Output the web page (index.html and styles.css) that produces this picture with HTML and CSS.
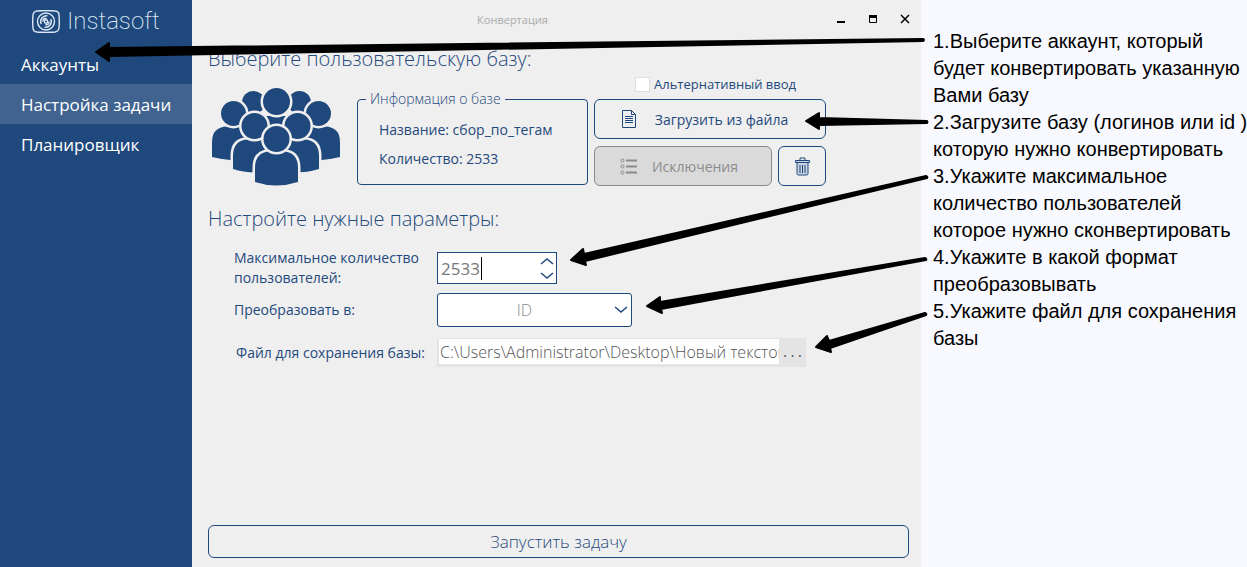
FILE: index.html
```html
<!DOCTYPE html>
<html lang="ru">
<head>
	<meta charset="utf-8">
	<title>Конвертация</title>
	<link rel="stylesheet" href="styles.css">
</head>
<body>

<div class="app">
    <aside class="sidebar">
        <div class="logo">
            <svg width="28" height="23" viewBox="0 0 28 23" fill="none" stroke="#DCE8F6" stroke-width="1.4">
                <path d="M5 1 Q14 .2 23 1 Q27 1.5 27 5 Q27.6 11.5 27 18 Q26.5 21.5 23 22 Q14 22.8 5 22 Q1 21.5 1 18 Q.4 11.5 1 5 Q1.5 1.5 5 1Z"/>
                <circle cx="14" cy="11.5" r="8.5"/>
                <circle cx="14" cy="11.5" r="1.7"/>
                <path d="M9.2 14 A5.800 5.800 0 0 1 15.500 5.900 M10.800 11.500 A3.600 3.600 0 0 1 14.500 8.200 M18.800 9 A5.800 5.800 0 0 1 12.500 17.100 M17.200 11.500 A3.600 3.600 0 0 1 13.500 14.800"/>
            </svg>
            <span>Instasoft</span>
        </div>
        <nav>
            <a href="#">Аккаунты</a>
            <a href="#" class="active">Настройка задачи</a>
            <a href="#">Планировщик</a>
        </nav>
    </aside>

    <main class="window">
        <header class="titlebar">
            <div class="title">Конвертация</div>
            <button aria-label="Свернуть"><svg width="10" height="10"><path d="M1 8h8" stroke="#000" stroke-width="2"/></svg></button>
            <button aria-label="Развернуть"><svg width="10" height="10"><path d="M1.5 1v7.5h7V1" fill="none" stroke="#000"/><path d="M1 2.5h8" stroke="#000" stroke-width="3"/></svg></button>
            <button aria-label="Закрыть"><svg width="10" height="10"><path d="M1 1l8 8M9 1l-8 8" stroke="#000" stroke-width="1.5"/></svg></button>
        </header>

        <div class="content">
            <h2>Выберите пользовательскую базу:</h2>
            <div class="base">
                <svg class="people" width="128" height="98" viewBox="0 0 128 98">
                    <circle cx="41.5" cy="14.5" r="11.5"/>
                    <circle cx="87.5" cy="14.5" r="11.5"/>
                    <path d="M54 28H76L72 37H57Z"/>
                    <circle cx="64.5" cy="13.5" r="13.5"/>
                    <path d="M0 69V54Q0 39 15 38.5H40V73Q16 73 0 69Z"/>
                    <path d="M128 69V54Q128 39 113 38.5H88V73Q112 73 128 69Z"/>
                    <circle cx="21.5" cy="25.5" r="12.5"/>
                    <circle cx="106.5" cy="25.5" r="12.5"/>
                    <path d="M21 81V68Q21 52 36 51.5H60V84Q36 86 21 81Z"/>
                    <path d="M107 81V68Q107 52 92 51.5H68V84Q92 86 107 81Z"/>
                    <circle cx="42.5" cy="38" r="13"/>
                    <circle cx="85.5" cy="38" r="13"/>
                    <path d="M43 94V80Q43 64 58 63.5H71Q86 64 86 80V94Q64 101 43 94Z"/>
                    <circle cx="64.5" cy="51" r="13"/>
                </svg>
                <fieldset class="info">
                    <legend>Информация о базе</legend>
                    <p>Название: сбор_по_тегам</p>
                    <p>Количество: 2533</p>
                </fieldset>
                <div class="actions">
                    <label class="alt"><input type="checkbox">Альтернативный ввод</label>
                    <button class="btn load">
                        <svg width="14" height="18" fill="none" stroke="#1F497D"><path d="M.5.5h9l4 4v13H.5zM9.5.5v4h4M3 6.5h8M3 8.5h8M3 10.5h8M3 12.5h8"/></svg>
                        Загрузить из файла
                    </button>
                    <button class="btn except" disabled>
                        <svg width="17" height="17" fill="none" stroke="#8A8A8A"><circle cx="2.5" cy="2.5" r="1.5"/><circle cx="2.5" cy="8.5" r="1.5"/><circle cx="2.5" cy="14.5" r="1.5"/><path d="M6 2.5h11M6 8.5h11M6 14.5h11" stroke-width="2"/></svg>
                        Исключения
                    </button>
                    <button class="btn trash" aria-label="Удалить">
                        <svg width="15" height="19" fill="#C9D2E0" stroke="#1F497D"><path d="M5 3V1h5v2" fill="none"/><path d="M2 6v10.5q0 1.5 1.5 1.5h8q1.5 0 1.5-1.5V6M.5 3.5h14v2H.5zM5 8v8M7.5 8v8M10 8v8"/></svg>
                    </button>
                </div>
            </div>

            <h2>Настройте нужные параметры:</h2>
            <div class="params">
                <label for="max">Максимальное количество пользователей:</label>
                <div class="number">
                    <input id="max" type="text" value="2533">
                    <i class="caret"></i>
                    <div class="steps">
                        <button aria-label="Больше"><svg width="14" height="8"><path d="M1 7l6-5 6 5"/></svg></button>
                        <button aria-label="Меньше"><svg width="14" height="8"><path d="M1 1l6 5 6-5"/></svg></button>
                    </div>
                </div>

                <label for="format">Преобразовать в:</label>
                <div class="select">
                    <select id="format"><option>ID</option></select>
                    <svg width="14" height="8"><path d="M1 1l6 5 6-5"/></svg>
                </div>

                <label for="file" class="file-label">Файл для сохранения базы:</label>
                <div class="file">
                    <input id="file" type="text" value="C:\Users\Administrator\Desktop\Новый текстовый документ.txt">
                    <button aria-label="Обзор">. . .</button>
                </div>
            </div>

            <button class="btn start">Запустить задачу</button>
        </div>
    </main>

    <aside class="notes">
        <p>1.Выберите аккаунт, который<br>будет конвертировать указанную<br>Вами базу</p>
        <p>2.Загрузите базу (логинов или id )<br>которую нужно конвертировать</p>
        <p>3.Укажите максимальное<br>количество пользователей<br>которое нужно сконвертировать</p>
        <p>4.Укажите в какой формат<br>преобразовывать</p>
        <p>5.Укажите файл для сохранения<br>базы</p>
    </aside>

    <!-- Arrows from the notes to the controls -->
    <svg class="arrows" width="940" height="380" stroke="#000" stroke-linejoin="round" stroke-width="2">
        <path d="M96 52L109 43L109 48L923 39Q925 40 923 41L109 56L109 61Z"/>
        <path d="M806 121L819 113L819 118L927 121Q928 122 927 123L819 125L819 129Z"/>
        <path d="M571 260L583 249L584 254L926 176Q928 177 927 178L585 261L586 265Z"/>
        <path d="M647 306L660 297L660 302L925 258Q927 259 926 260L661 309L662 313Z"/>
        <path d="M816 347L827 336L829 341L925 313Q927 314 926 315L830 348L831 352Z"/>
    </svg>
</div>

</body>
</html>
```
FILE: styles.css
```css
* { box-sizing: border-box; }
body {
    margin: 0;
    font-family: "Open Sans", "Noto Sans", sans-serif;
    font-size: 14px;
    color: #1F497D;
}
button, input, select {
    font-family: inherit;
    color: inherit;
    margin: 0;
    padding: 0;
}
button { border: 0; background: none; }
p { margin: 0; }
.app {
    position: relative;
    display: flex;
    min-height: 100vh;
    background: #F8F9FE;
}

/* Sidebar */
.sidebar {
    width: 192px;
    flex-shrink: 0;
    background: #1F497D;
}
.logo {
    display: flex;
    align-items: center;
    gap: 7px;
    height: 42px;
    margin-bottom: 2px;
    padding-left: 32px;
    font-family: Roboto, sans-serif;
    font-size: 24px;
    font-weight: 200;
    color: #DCE8F6;
}
.sidebar nav a {
    display: block;
    height: 40px;
    padding-left: 21px;
    line-height: 42px;
    font-size: 17px;
    color: #FFF;
    text-decoration: none;
}
.sidebar nav .active { background: #406390; }

/* Window */
.window {
    flex: 1;
    display: flex;
    flex-direction: column;
    background: #EFEFEF;
}
.titlebar {
    display: flex;
    align-items: center;
    height: 38px;
    padding-left: 8px;
}
.titlebar .title {
    flex: 1;
    text-align: center;
    font-size: 11px;
    color: #ABABAB;
}
.titlebar button { width: 32px; height: 32px; }
.content {
    flex: 1;
    display: flex;
    flex-direction: column;
    padding: 7px 12px 9px 16px;
}
h2 {
    margin: 0;
    font-size: 20px;
    line-height: 28px;
    font-weight: 300;
}
.base {
    display: flex;
    align-items: flex-end;
    padding: 3px 0 19px 4px;
}
.people {
    margin-right: 17px;
    overflow: visible;
    fill: #1F497D;
    stroke: #EFEFEF;
    stroke-width: 5;
    paint-order: stroke;
}
.info {
    width: 231px;
    margin: 0 6px 1px 0;
    padding: 6px 21px 11px;
    border: 1px solid #1F497D;
    border-radius: 4px;
}
.info legend {
    margin-left: -13px;
    padding: 0 4px;
    font-size: 14px;
    font-weight: 300;
    line-height: 20px;
}
.info p { line-height: 29px; }
.actions {
    display: grid;
    grid-template-columns: 178px 48px;
    gap: 7px 6px;
}
.alt, .load { grid-column: span 2; }
.alt {
    display: flex;
    align-items: center;
    gap: 4px;
    height: 16px;
    padding-left: 41px;
    font-size: 13px;
}
.alt input {
    appearance: none;
    width: 15px;
    height: 15px;
    background: #FFF;
    border: 1px solid #DDD;
}
.btn {
    display: flex;
    align-items: center;
    justify-content: center;
    height: 40px;
    border: 1px solid #1F497D;
    border-radius: 6px;
    font-size: 14px;
}
.load { gap: 19px; padding-right: 10px; }
.except {
    gap: 15px;
    padding-right: 8px;
    background: #DADADA;
    border-color: #8A8A8A;
    color: #8A8A8A;
}
.start {
    height: 33px;
    margin-top: auto;
    font-size: 17px;
    font-weight: 300;
}

/* Parameters */
.params {
    display: grid;
    grid-template-columns: 203px 1fr;
    grid-template-rows: 40px 44px 41px;
    align-items: center;
    padding: 15px 0 0 26px;
}
.params label { line-height: 20px; }
.params .file-label { padding-left: 2px; white-space: nowrap; }
.params svg {
    fill: none;
    stroke: #1F497D;
    stroke-width: 1.5;
}
.number {
    position: relative;
    display: flex;
    width: 120px;
    height: 32px;
    background: #FFF;
    border: 1px solid #1F497D;
}
.number input {
    flex: 1;
    min-width: 0;
    padding-left: 3px;
    border: 0;
    font-size: 17px;
    color: #777;
}
.caret {
    position: absolute;
    left: 43px;
    top: 4px;
    width: 1px;
    height: 23px;
    background: #000;
}
.steps { display: flex; flex-direction: column; width: 18px; }
.steps button {
    flex: 1;
    display: flex;
    align-items: center;
    justify-content: center;
}
.select {
    position: relative;
    width: 195px;
    height: 34px;
}
.select select {
    appearance: none;
    width: 100%;
    height: 100%;
    padding-right: 20px;
    background: #FFF;
    border: 1px solid #1F497D;
    border-radius: 3px;
    font-size: 16px;
    font-weight: 300;
    color: #8A8A8A;
    text-align: center;
    text-align-last: center;
}
.select svg { position: absolute; right: 4px; top: 13px; }
.file {
    display: flex;
    width: 369px;
    height: 29px;
    padding: 1px 0 3px 2px;
    background: #E4E4E4;
}
.file input {
    flex: 1;
    min-width: 0;
    padding-left: 1px;
    border: 0;
    font-size: 16px;
    font-weight: 300;
    color: #555;
}
.file button { width: 27px; font-size: 14px; color: #444; }

/* Notes */
.notes {
    width: 326px;
    padding: 28px 0 0 12px;
    font-family: "Liberation Sans", Arial, sans-serif;
    font-size: 20px;
    line-height: 27px;
    color: #000;
    white-space: nowrap;
}
.arrows {
    position: absolute;
    left: 0;
    top: 0;
    pointer-events: none;
}
```
